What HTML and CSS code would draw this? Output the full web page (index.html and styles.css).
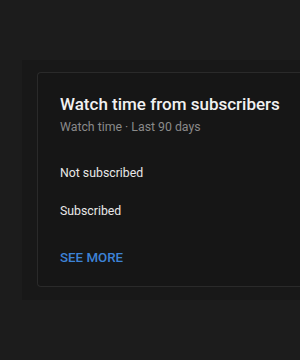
FILE: index.html
```html
<!DOCTYPE html>
<html>
<head>
<meta charset="utf-8">
<link rel="stylesheet" href="styles.css">
</head>
<body>
<div class="page">
  <div class="panel">
    <div class="card">
      <div class="title">Watch time from subscribers</div>
      <div class="subtitle">Watch time · Last 90 days</div>
      <div class="rows">
        <div class="row">Not subscribed</div>
        <div class="row">Subscribed</div>
      </div>
      <div class="more">SEE MORE</div>
    </div>
  </div>
</div>
</body>
</html>
```
FILE: styles.css
```css
html, body {
  margin: 0;
  padding: 0;
  background: #1c1c1c;
  overflow: hidden;
  width: 300px;
  height: 360px;
}
.page {
  padding: 60px 0 0 22px;
  font-family: Roboto, "Liberation Sans", sans-serif;
}
.panel {
  width: 320px;
  background: #181818;
  padding: 12px 0 13px 15px;
}
.card {
  background: #161616;
  border: 1px solid #2a2a2a;
  border-right: none;
  border-radius: 4px 0 0 4px;
  padding: 19px 0 18px 22px;
}
.title {
  font-size: 17px;
  line-height: 24px;
  font-weight: 500;
  color: #f1f1f1;
}
.subtitle {
  font-size: 12.3px;
  line-height: 20px;
  margin-top: 1px;
  color: #8a8a8a;
}
.rows {
  margin-top: 26px;
  display: flex;
  flex-direction: column;
  gap: 18px;
}
.row {
  font-size: 12.3px;
  line-height: 20px;
  color: #e8e8e8;
}
.more {
  margin-top: 27px;
  font-size: 13.3px;
  line-height: 20px;
  font-weight: 500;
  color: #3d82d6;
}
```
